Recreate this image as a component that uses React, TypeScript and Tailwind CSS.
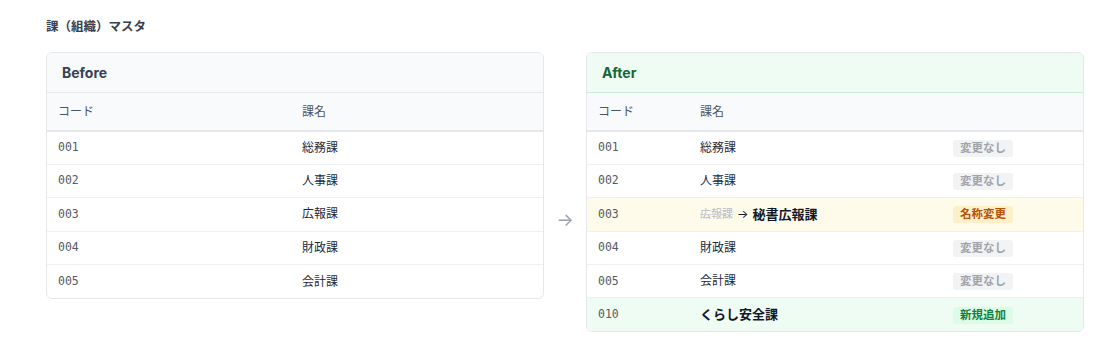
const jp = "font-['Inter','Noto_Sans_CJK_JP',sans-serif]";
const mono = "font-['DejaVu_Sans_Mono','Liberation_Mono',monospace]";

type Status = "same" | "renamed" | "added";

interface AfterRow {
	code: string;
	name: string;
	oldName?: string;
	status: Status;
}

const beforeRows = [
	{ code: "001", name: "総務課" },
	{ code: "002", name: "人事課" },
	{ code: "003", name: "広報課" },
	{ code: "004", name: "財政課" },
	{ code: "005", name: "会計課" },
];

const afterRows: AfterRow[] = [
	{ code: "001", name: "総務課", status: "same" },
	{ code: "002", name: "人事課", status: "same" },
	{ code: "003", name: "秘書広報課", oldName: "広報課", status: "renamed" },
	{ code: "004", name: "財政課", status: "same" },
	{ code: "005", name: "会計課", status: "same" },
	{ code: "010", name: "くらし安全課", status: "added" },
];

const StatusBadge = ({ status }: { status: Status }) => {
	if (status === "renamed") {
		return <span className="inline-block rounded-[3px] bg-[#fdf0c8] px-[7px] py-[2px] text-[11.5px] leading-[13px] font-bold text-[#b45309]">名称変更</span>;
	}
	if (status === "added") {
		return <span className="inline-block rounded-[3px] bg-[#dcfce7] px-[7px] py-[2px] text-[11.5px] leading-[13px] font-bold text-[#15803d]">新規追加</span>;
	}
	return <span className="inline-block rounded-[3px] bg-[#f1f3f5] px-[7px] py-[2px] text-[11.5px] leading-[13px] font-bold text-[#a0a4ab]">変更なし</span>;
};

const rowBg = (status: Status) => {
	if (status === "renamed") return "bg-[#fefbeb]";
	if (status === "added") return "bg-[#effcf4]";
	return "bg-white";
};

export default function App() {
	return (
		<div className={`min-h-[341px] bg-white pl-[46px] pt-[18px] ${jp}`}>
			<h2 className="mb-[16px] text-[12.5px] leading-[18px] font-bold text-[#374151]">課（組織）マスタ</h2>
			<div className="flex items-start">
				{/* Before */}
				<div className="w-[498px] overflow-hidden rounded-[6px] border border-[#e5e7eb] bg-white">
					<div className="flex h-[40px] items-center border-b border-[#e5e7eb] bg-[#f8fafc] px-[15px] text-[14px] font-bold text-[#374151]">Before</div>
					<table className="w-full border-collapse text-[12px]">
						<thead>
							<tr className="h-[38px] border-b-2 border-[#e5e7eb] bg-[#f8fafc] text-left text-[12px] text-[#4b5563]">
								<th className="w-[243px] px-[11px] font-normal">コード</th>
								<th className="px-[12px] font-normal">課名</th>
							</tr>
						</thead>
						<tbody>
							{beforeRows.map((r, i) => (
								<tr key={r.code} className={`h-[33.4px] ${i < beforeRows.length - 1 ? "border-b border-[#eef0f2]" : ""}`}>
									<td className={`px-[11px] text-[11.5px] text-[#555b63] ${mono}`}>{r.code}</td>
									<td className="px-[12px] text-[#1f2937]">{r.name}</td>
								</tr>
							))}
						</tbody>
					</table>
				</div>

				<div className="flex w-[42px] justify-center pt-[154px] text-[18px] text-[#9ca3af]">→</div>

				{/* After */}
				<div className="w-[498px] overflow-hidden rounded-[6px] border border-[#e5e7eb] bg-white">
					<div className="flex h-[40px] items-center border-b border-[#c5ecd4] bg-[#effcf4] px-[15px] text-[14px] font-bold text-[#166534]">After</div>
					<table className="w-full border-collapse text-[12px]">
						<thead>
							<tr className="h-[38px] border-b-2 border-[#e5e7eb] bg-[#f8fafc] text-left text-[12px] text-[#4b5563]">
								<th className="w-[101px] px-[11px] font-normal">コード</th>
								<th className="w-[253px] px-[12px] font-normal">課名</th>
								<th className="px-[12px] font-normal" />
							</tr>
						</thead>
						<tbody>
							{afterRows.map((r, i) => (
								<tr key={r.code} className={`h-[33.4px] ${rowBg(r.status)} ${i < afterRows.length - 1 ? "border-b border-[#eef0f2]" : ""}`}>
									<td className={`px-[11px] text-[11.5px] text-[#555b63] ${mono}`}>{r.code}</td>
									<td className="px-[12px] text-[#1f2937]">
										{r.oldName ? (
											<span className="flex items-center gap-[4px]">
												<span className="text-[11px] text-[#b8bcc2] line-through decoration-[#d1d5db]">{r.oldName}</span>
												<span className="text-[12px] text-[#111827]">→</span>
												<b className="text-[13px] text-[#111827]">{r.name}</b>
											</span>
										) : r.status === "added" ? (
											<b className="text-[13px] text-[#111827]">{r.name}</b>
										) : (
											r.name
										)}
									</td>
									<td className="px-[12px]">
										<StatusBadge status={r.status} />
									</td>
								</tr>
							))}
						</tbody>
					</table>
				</div>
			</div>
		</div>
	);
}
